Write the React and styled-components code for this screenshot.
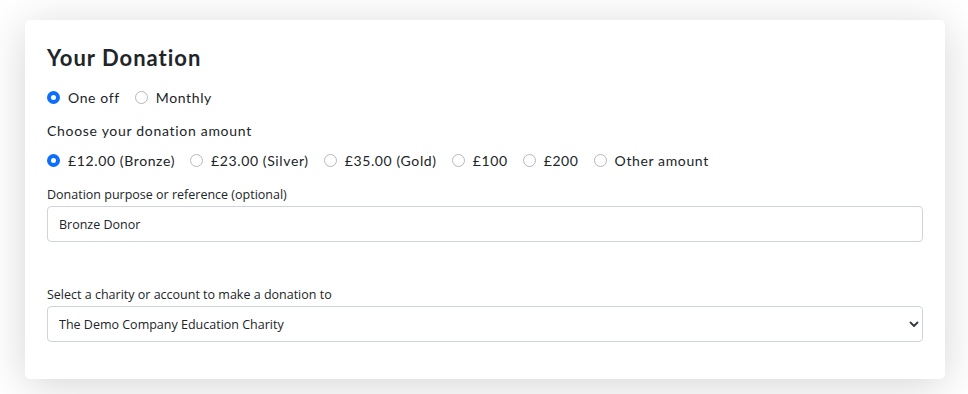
import React, { useState } from "react";
import styled, { createGlobalStyle } from "styled-components";

const GlobalStyle = createGlobalStyle`
  * {
    margin: 0;
    padding: 0;
    box-sizing: border-box;
  }
  html, body {
    width: 100%;
    height: 100%;
    background: #ffffff;
    overflow: hidden;
  }
`;

const Page = styled.div`
  padding: 20px 23px 0 25px;
  font-family: "Lato", "Liberation Sans", sans-serif;
  color: #212529;
`;

const Card = styled.section`
  width: 920px;
  background: #fff;
  border-radius: 5px;
  box-shadow: 0 6px 44px rgba(0, 0, 0, 0.17);
  padding: 25px 22px 37px 22px;
  display: flex;
  flex-direction: column;
`;

const Title = styled.h2`
  font-size: 22px;
  line-height: 26px;
  font-weight: 700;
  letter-spacing: 1px;
  color: #212529;
  margin-bottom: 16px;
`;

const RadioRow = styled.div`
  display: flex;
  align-items: center;
  height: 20px;
  gap: 15px;
  margin-bottom: ${({ $mb }) => $mb || 0}px;
`;

const Option = styled.label`
  display: flex;
  align-items: center;
  gap: 8px;
  font-size: 14px;
  letter-spacing: 0.62px;
  color: #212529;
  cursor: pointer;
`;

const Dot = styled.span`
  width: 13px;
  height: 13px;
  border-radius: 50%;
  flex-shrink: 0;
  border: ${({ $on }) => ($on ? "4px solid #0d6efd" : "1px solid #b4b9bf")};
  background: #fff;
`;

const Caption = styled.p`
  font-size: 14px;
  line-height: 20px;
  letter-spacing: 0.7px;
  margin-bottom: 9px;
`;

const FieldLabel = styled.label`
  display: block;
  font-family: "Open Sans", "Liberation Sans", sans-serif;
  font-size: 12.5px;
  line-height: 18px;
  color: #212529;
  margin-top: ${({ $mt }) => $mt}px;
  margin-bottom: 2px;
`;

const TextInput = styled.input`
  width: 100%;
  height: 36px;
  border: 1px solid #ced4da;
  border-radius: 4px;
  padding: 0 11px;
  font-family: "Open Sans", "Liberation Sans", sans-serif;
  font-size: 12.5px;
  color: #212529;
  outline: none;
`;

const SelectWrap = styled.div`
  position: relative;
  width: 100%;
`;

const Select = styled.select`
  width: 100%;
  height: 36px;
  border: 1px solid #ced4da;
  border-radius: 4px;
  padding: 0 30px 0 11px;
  font-family: "Open Sans", "Liberation Sans", sans-serif;
  font-size: 12.5px;
  color: #212529;
  background: #fff;
  appearance: none;
  outline: none;
`;

const Chevron = styled.svg`
  position: absolute;
  right: 4px;
  top: 14px;
  width: 10px;
  height: 8px;
  pointer-events: none;
`;

const frequencies = ["One off", "Monthly"];
const amounts = [
  "£12.00 (Bronze)",
  "£23.00 (Silver)",
  "£35.00 (Gold)",
  "£100",
  "£200",
  "Other amount",
];

const App = () => {
  const [freq, setFreq] = useState(0);
  const [amount, setAmount] = useState(0);

  return (
    <>
      <GlobalStyle />
      <Page>
        <Card>
          <Title>Your Donation</Title>
          <RadioRow $mb={14}>
            {frequencies.map((f, i) => (
              <Option key={f} onClick={() => setFreq(i)}>
                <Dot $on={freq === i} />
                {f}
              </Option>
            ))}
          </RadioRow>
          <Caption>Choose your donation amount</Caption>
          <RadioRow>
            {amounts.map((a, i) => (
              <Option key={a} onClick={() => setAmount(i)}>
                <Dot $on={amount === i} />
                {a}
              </Option>
            ))}
          </RadioRow>
          <FieldLabel $mt={16}>Donation purpose or reference (optional)</FieldLabel>
          <TextInput defaultValue="Bronze Donor" />
          <FieldLabel $mt={44}>Select a charity or account to make a donation to</FieldLabel>
          <SelectWrap>
            <Select defaultValue="demo">
              <option value="demo">The Demo Company Education Charity</option>
            </Select>
            <Chevron viewBox="0 0 10 8">
              <path d="M1.5 2.5 L5 6 L8.5 2.5" fill="none" stroke="#343a40" strokeWidth="1.8" strokeLinecap="round" strokeLinejoin="round" />
            </Chevron>
          </SelectWrap>
        </Card>
      </Page>
    </>
  );
};

export default App;
